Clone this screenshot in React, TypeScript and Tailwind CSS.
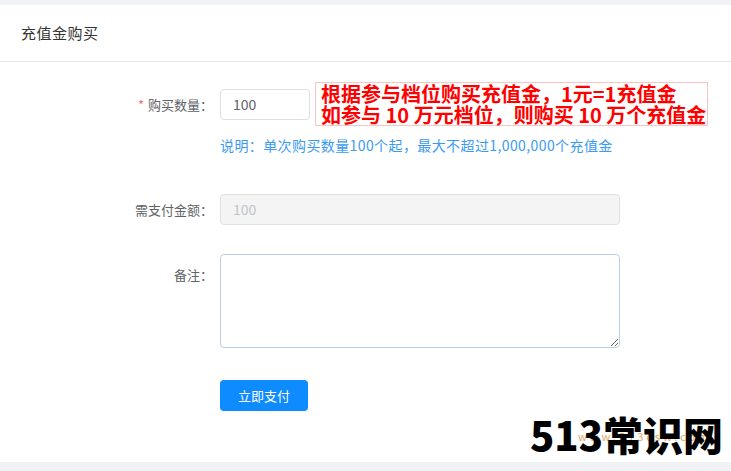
const font = { fontFamily: '"Noto Sans CJK SC", "Noto Sans", sans-serif' };

function Label({ children, required }: { children: string; required?: boolean }) {
  return (
    <div className="flex h-[31px] w-[220px] shrink-0 items-center justify-end pr-[7px] text-[13px] text-[#606266]">
      {required && <span className="mr-1 text-[#f56c6c]">*</span>}
      {children}
    </div>
  );
}

export default function App() {
  return (
    <div className="min-h-[471px] w-[731px] bg-[#f0f2f5] pt-[5px]" style={font}>
      <div className="relative h-[457px] bg-white">
        <div className="flex h-[57px] items-center border-b border-[#e6e6e6] pl-[21px] text-[15px] tracking-[0.5px] text-[#333]">
          充值金购买
        </div>

        <div className="pt-[27px]">
          {/* 购买数量 */}
          <div className="flex items-start">
            <Label required>购买数量：</Label>
            <div className="flex flex-col">
              <div className="flex items-start gap-[5px]">
                <div className="flex h-[31px] w-[90px] shrink-0 items-center rounded-[4px] border border-[#dcdfe6] px-3 text-[14px] text-[#606266]">
                  100
                </div>
                <div className="-mt-[7px] -mb-[8px] w-[393px] whitespace-nowrap border border-[#fbc4c4] px-[5px] text-[20px] font-semibold leading-[21px] text-[#ff0000]">
                  <div>根据参与档位购买充值金，1元=1充值金</div>
                  <div>如参与 10 万元档位，则购买 10 万个充值金</div>
                </div>
              </div>
              <div className="mt-[16px] whitespace-nowrap text-[14px] leading-[18px] tracking-[0.4px] text-[#3a9bf0]">
                说明：单次购买数量100个起，最大不超过1,000,000个充值金
              </div>
            </div>
          </div>

          {/* 需支付金额 */}
          <div className="mt-[40px] flex items-start">
            <Label>需支付金额：</Label>
            <div className="flex h-[31px] w-[400px] items-center rounded-[4px] border border-[#e0e0e0] bg-[#f4f4f4] px-3 text-[14px] text-[#c0c4cc]">
              100
            </div>
          </div>

          {/* 备注 */}
          <div className="mt-[29px] flex items-start">
            <div className="pt-[5px]">
              <Label>备注：</Label>
            </div>
            <textarea className="h-[94px] w-[400px] rounded-[4px] border border-[#b8d0e8] px-3 py-1 text-[13px] outline-none" />
          </div>

          {/* 立即支付 */}
          <div className="mt-[32px] flex">
            <div className="w-[220px] shrink-0" />
            <button className="h-[31px] w-[88px] rounded-[4px] bg-[#0d8bff] text-[13px] text-white">
              立即支付
            </button>
          </div>
        </div>

        <div className="absolute bottom-[6px] right-[8px]">
          <div className="absolute left-[48px] top-[16px] text-[11px] tracking-[3px] text-[#e0a868]">
            www.513csw.com
          </div>
          <div className="relative text-[40px] font-black leading-[44px] text-black">513常识网</div>
        </div>
      </div>
    </div>
  );
}
